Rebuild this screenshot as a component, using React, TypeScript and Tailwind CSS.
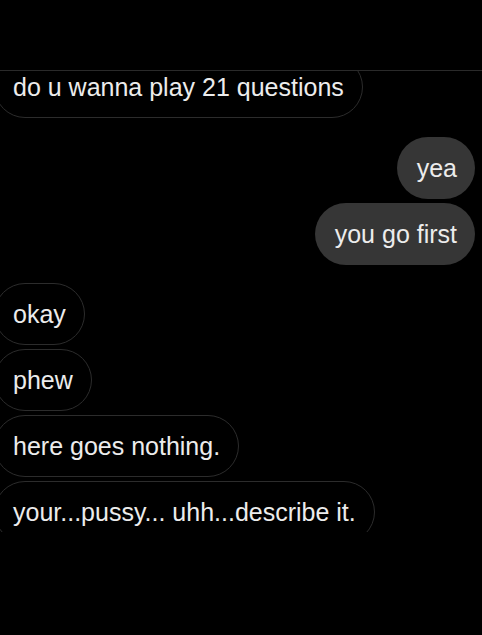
const messages = [
  { text: "do u wanna play 21 questions", mine: false, gap: "-mt-[15px]" },
  { text: "yea", mine: true, gap: "mt-[19px]" },
  { text: "you go first", mine: true, gap: "mt-[4px]" },
  { text: "okay", mine: false, gap: "mt-[18px]" },
  { text: "phew", mine: false, gap: "mt-[4px]" },
  { text: "here goes nothing.", mine: false, gap: "mt-[4px]" },
  { text: "your...pussy... uhh...describe it.", mine: false, gap: "mt-[4px]" },
];

export default function App() {
  return (
    <div
      className="w-[482px] h-[635px] bg-black text-[#ececec] overflow-hidden"
      style={{ fontFamily: '"Liberation Sans", Arial, sans-serif' }}
    >
      <div className="h-[70px]" />
      <div className="h-px bg-[#2a2a2a]" />
      <div className="h-[461px] overflow-hidden flex flex-col">
        {messages.map((m, i) => (
          <div
            key={i}
            className={`flex ${m.mine ? "justify-end pr-[7px]" : "justify-start -ml-[6px]"} ${m.gap}`}
          >
            {m.mine ? (
              <div className="bg-[#363636] rounded-full h-[62px] flex items-center pl-[20px] pr-[18px] text-[25px] leading-none whitespace-nowrap">
                {m.text}
              </div>
            ) : (
              <div className="border border-[#2c2c2c] rounded-full h-[62px] flex items-center pl-[18px] pr-[18px] text-[25px] leading-none whitespace-nowrap">
                {m.text}
              </div>
            )}
          </div>
        ))}
      </div>
    </div>
  );
}
